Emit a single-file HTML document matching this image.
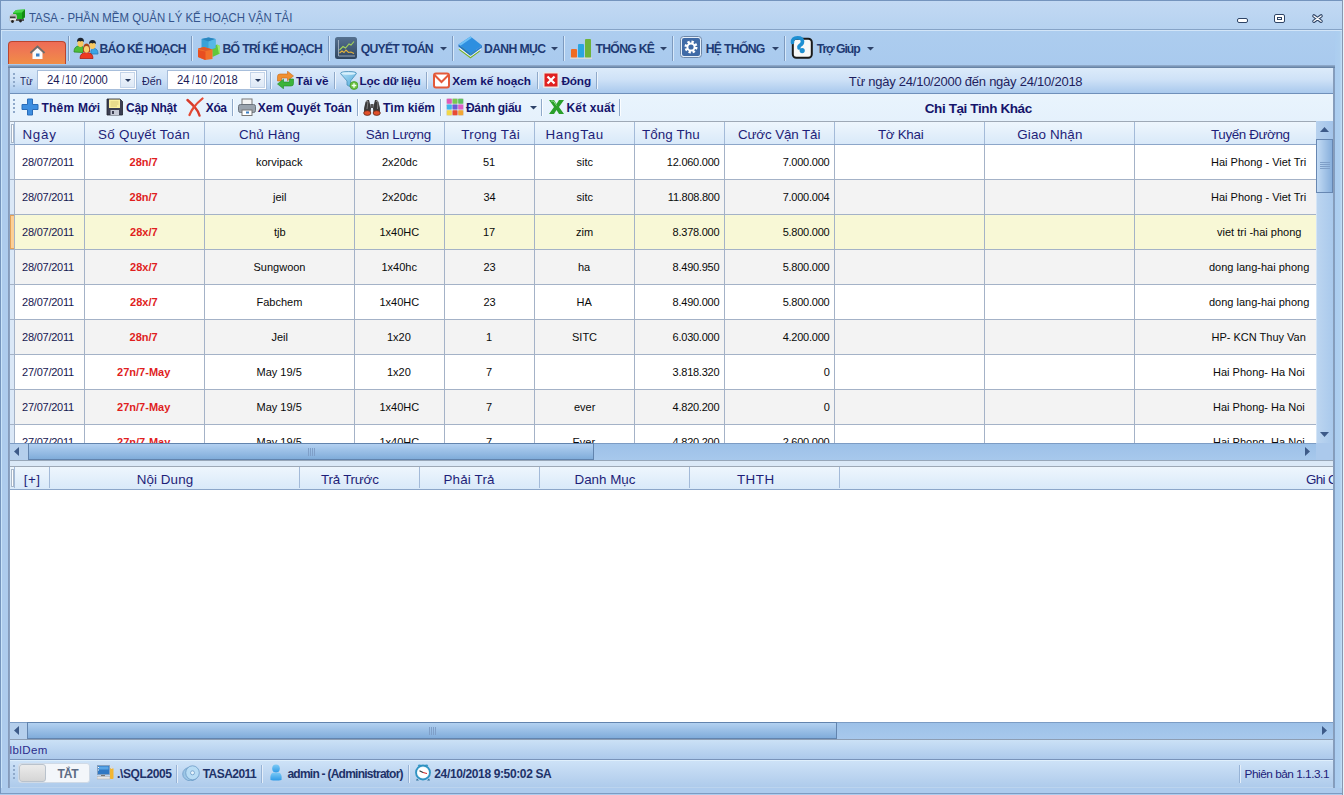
<!DOCTYPE html><html><head><meta charset="utf-8"><style>
*{margin:0;padding:0;box-sizing:border-box}
html,body{width:1344px;height:795px;overflow:hidden;background:#b9d4ef;font-family:"Liberation Sans",sans-serif}
div,span,svg{position:absolute}
.t{white-space:nowrap;line-height:1}
</style></head><body>
<div style="left:0px;top:0px;width:1344px;height:795px;background:#adcbed"></div>
<div style="left:0px;top:0px;width:1343px;height:794px;border:1px solid #7494bd;border-right-color:#7d9cc2;border-bottom-color:#7d9cc2"></div>
<div style="left:1px;top:1px;width:1342px;height:28px;background:linear-gradient(#c2d9f3,#b6d2f0)"></div>
<div style="left:1px;top:29px;width:1342px;height:1px;background:#86a3c6"></div>
<div style="left:1px;top:30px;width:1342px;height:1px;background:#d2e5f8"></div>
<span class="t" style="left:29.40px;top:12px;font-size:12.8px;color:#34548c;transform:scaleX(0.8919);transform-origin:0 0;">TASA - PHẦN MỀM QUẢN LÝ KẾ HOẠCH VẬN TẢI</span>
<svg style="left:9px;top:9px" width="17" height="14" viewBox="0 0 17 14"><path d="M4 4 L7 1 L16 0.5 L16 8 L13 11 L5 11 Z" fill="#1fb51f"/><path d="M4 4 L7 1 L16 0.5 L13 3.5 Z" fill="#4cd64c"/><path d="M13 3.5 L16 0.5 V8 L13 11 Z" fill="#138a13"/><path d="M0.5 7 L3 5 L7 5 L8 7 V12 L1 12.5 L0.5 11 Z" fill="#b8b8b8"/><path d="M1 7.5 H6.5 V9 H1 Z" fill="#3a3a3a"/><rect x="1" y="10" width="6" height="1.2" fill="#eee"/><rect x="7" y="10" width="8" height="2" fill="#555"/><circle cx="3.5" cy="12.5" r="1.4" fill="#222"/><circle cx="11.5" cy="12" r="1.4" fill="#222"/></svg>
<div style="left:1237px;top:18px;width:11px;height:5px;border:1.5px solid #2e4466;border-radius:2px;background:#fff"></div>
<div style="left:1274px;top:14px;width:11px;height:9px;border:1.5px solid #2e4466;border-radius:2px;background:#fff"></div>
<div style="left:1277px;top:17px;width:5px;height:3px;border:1.2px solid #2e4466;background:#fff"></div>
<svg style="left:1311px;top:13px" width="13" height="11" viewBox="0 0 13 11"><path d="M2.9 2.9 L10.1 8.3 M10.1 2.9 L2.9 8.3" stroke="#2e4466" stroke-width="3.4" stroke-linecap="round"/><path d="M2.9 2.9 L10.1 8.3 M10.1 2.9 L2.9 8.3" stroke="#fff" stroke-width="1.3" stroke-linecap="round"/></svg>
<div style="left:1px;top:31px;width:1342px;height:34px;background:linear-gradient(#adcdef,#a9caee)"></div>
<div style="left:8px;top:41px;width:58px;height:23px;background:linear-gradient(#ee6c56,#ef7a52 45%,#f18e46);border:1px solid #b9452f;border-bottom:none;border-radius:4px 4px 0 0"></div>
<svg style="left:29px;top:45px" width="17" height="15" viewBox="0 0 17 15"><path d="M1.5 8 L8.5 1.5 L15.5 8" fill="none" stroke="#6d6d6d" stroke-width="2"/><path d="M3.5 7.5 L8.5 3 L13.5 7.5 V14 H3.5 Z" fill="#fafafa"/><rect x="7" y="8.5" width="3.5" height="3" fill="#3b7fc4"/></svg>
<div style="left:68px;top:36px;width:1px;height:25px;background:#7d9abf"></div>
<div style="left:69px;top:36px;width:1px;height:25px;background:#d6e8fa"></div>
<div style="left:191px;top:36px;width:1px;height:25px;background:#7d9abf"></div>
<div style="left:192px;top:36px;width:1px;height:25px;background:#d6e8fa"></div>
<div style="left:328px;top:36px;width:1px;height:25px;background:#7d9abf"></div>
<div style="left:329px;top:36px;width:1px;height:25px;background:#d6e8fa"></div>
<div style="left:452px;top:36px;width:1px;height:25px;background:#7d9abf"></div>
<div style="left:453px;top:36px;width:1px;height:25px;background:#d6e8fa"></div>
<div style="left:563px;top:36px;width:1px;height:25px;background:#7d9abf"></div>
<div style="left:564px;top:36px;width:1px;height:25px;background:#d6e8fa"></div>
<div style="left:672px;top:36px;width:1px;height:25px;background:#7d9abf"></div>
<div style="left:673px;top:36px;width:1px;height:25px;background:#d6e8fa"></div>
<div style="left:784px;top:36px;width:1px;height:25px;background:#7d9abf"></div>
<div style="left:785px;top:36px;width:1px;height:25px;background:#d6e8fa"></div>
<span class="t" style="left:99.60px;top:43px;font-size:12.2px;color:#1e3a74;font-weight:bold;letter-spacing:-0.782px;">BÁO KẾ HOẠCH</span>
<span class="t" style="left:222.50px;top:43px;font-size:12.2px;color:#1e3a74;font-weight:bold;letter-spacing:-0.679px;">BỐ TRÍ KẾ HOẠCH</span>
<span class="t" style="left:360.80px;top:43px;font-size:12.2px;color:#1e3a74;font-weight:bold;letter-spacing:-0.756px;">QUYẾT TOÁN</span>
<span class="t" style="left:484.00px;top:43px;font-size:12.2px;color:#1e3a74;font-weight:bold;letter-spacing:-0.629px;">DANH MỤC</span>
<span class="t" style="left:595.50px;top:43px;font-size:12.2px;color:#1e3a74;font-weight:bold;letter-spacing:-0.700px;">THỐNG KÊ</span>
<span class="t" style="left:705.70px;top:43px;font-size:12.2px;color:#1e3a74;font-weight:bold;letter-spacing:-0.671px;">HỆ THỐNG</span>
<span class="t" style="left:816.70px;top:43px;font-size:12.2px;color:#1e3a74;font-weight:bold;letter-spacing:-1.043px;">Trợ Giúp</span>
<svg style="left:440px;top:47px" width="7" height="4" viewBox="0 0 7 4"><path d="M0 0 H7 L3.5 3.5 Z" fill="#2d4269"/></svg>
<svg style="left:551px;top:47px" width="7" height="4" viewBox="0 0 7 4"><path d="M0 0 H7 L3.5 3.5 Z" fill="#2d4269"/></svg>
<svg style="left:660px;top:47px" width="7" height="4" viewBox="0 0 7 4"><path d="M0 0 H7 L3.5 3.5 Z" fill="#2d4269"/></svg>
<svg style="left:772px;top:47px" width="7" height="4" viewBox="0 0 7 4"><path d="M0 0 H7 L3.5 3.5 Z" fill="#2d4269"/></svg>
<svg style="left:867px;top:47px" width="7" height="4" viewBox="0 0 7 4"><path d="M0 0 H7 L3.5 3.5 Z" fill="#2d4269"/></svg>
<svg style="left:70px;top:34px" width="32" height="28" viewBox="0 0 32 28"><path d="M4 18 Q4 12.5 8.5 12 H12 Q14 13 13 18.5 Z" fill="#4cbf3a" stroke="#2f8a25" stroke-width="0.8"/><ellipse cx="10.5" cy="9.3" rx="3" ry="3.6" fill="#f8c860"/><path d="M7 8 Q7 3.8 10.5 3.8 Q14 3.8 14 8 Q12 6.5 10.5 7.5 Q9 6.5 7 8 Z" fill="#1c2430"/><path d="M21 20 Q20 14.5 24 14.5 Q28 14.5 28 20 Z" fill="#3aa6e6" stroke="#2a78b8" stroke-width="0.8"/><ellipse cx="22.5" cy="11.3" rx="3" ry="3.6" fill="#f8c860"/><path d="M19 10 Q19 6 22.5 6 Q26 6 26 10 Q24 8.5 22.5 9.5 Q21 8.5 19 10 Z" fill="#1c2430"/><path d="M13 18 Q12.5 9.5 16.5 9.5 Q20.5 9.5 20 18 Z" fill="#a8461a"/><path d="M10 24.5 Q10 18.5 16.5 18.5 Q23 18.5 23 24.5 Z" fill="#ee3a22" stroke="#b02010" stroke-width="0.8"/><ellipse cx="16.5" cy="15.3" rx="2.6" ry="3.4" fill="#fbd070"/></svg>
<svg style="left:195px;top:34px" width="32" height="28" viewBox="0 0 32 28"><path d="M17 13 L22 10.5 L25 12 L25 19.5 L17.5 23 Z" fill="#62c83a"/><path d="M22 10.5 L25 12 L25 19.5 L24 20 L22.5 12.5 Z" fill="#9de870"/><path d="M6.5 5 L13.5 3.5 L20.5 5 V14 L13.5 16 L6.5 14 Z" fill="#3aa2d8"/><path d="M6.5 5 L13.5 3.5 L20.5 5 L13.5 7.5 Z" fill="#2a86bf"/><path d="M13.5 7.5 L20.5 5 V14 L13.5 16 Z" fill="#56b8e6"/><path d="M3 14.5 L9 13 L17.5 15.5 V25 L10 26 L3 23 Z" fill="#f2702a"/><path d="M3 14.5 L9 13 L17.5 15.5 L10.5 17 Z" fill="#e0582a"/><path d="M3 16 L10.5 17.5 V26 L3 23 Z" fill="#e84e20"/></svg>
<svg style="left:335px;top:37px" width="23" height="22" viewBox="0 0 23 22"><defs><linearGradient id="gch" x1="0" y1="0" x2="0" y2="1"><stop offset="0" stop-color="#56718f"/><stop offset="1" stop-color="#2f4661"/></linearGradient></defs><rect x="0" y="0" width="22" height="22" rx="2.5" fill="url(#gch)"/><path d="M3.5 3 V19 H20" stroke="#aebccc" stroke-width="0.8" fill="none"/><path d="M4.5 13 L8 9.5 L10.5 11 L14 7 L16 8 L19 4.5" stroke="#a4d45a" stroke-width="1.1" fill="none"/><path d="M4.5 16 L7 14 L9 15.5 L11 13 L13.5 15.5 L16 15 L19 16.5" stroke="#e7b43a" stroke-width="1.1" fill="none"/></svg>
<svg style="left:458px;top:36px" width="25" height="23" viewBox="0 0 25 23"><path d="M0.5 13.5 L9 8 L21 16 L12.5 22.5 Z" fill="#8cc43a"/><path d="M2 12.5 L12.5 20.5 L21.5 14 L22.5 15 L12.5 22 L1.5 14 Z" fill="#6ea82a"/><path d="M1.5 11 L12.5 19 L23 11.5 L23 13.5 L12.5 21 L1.5 13 Z" fill="#f2f6f8"/><path d="M0.5 8.5 L12.5 0.5 L24 9.5 L12.5 18 Z" fill="#2e8fe0"/><path d="M0.5 8.5 L12.5 0.5 L14 1.7 L2.5 9.8 Z" fill="#6ec0f6"/><path d="M0.5 8.5 L12.5 18 L12.5 20 L0.5 10.5 Z" fill="#1f6fc0"/><path d="M12.5 18 L24 9.5 L24 11.5 L12.5 20 Z" fill="#2a7ed0"/></svg>
<svg style="left:570px;top:38px" width="22" height="21" viewBox="0 0 22 21"><rect x="1" y="11" width="6" height="9" rx="1" fill="#f06c22"/><rect x="8" y="6" width="6" height="14" rx="1" fill="#2aa6df"/><rect x="15" y="1" width="6" height="19" rx="1" fill="#6eb33a"/><rect x="0" y="19.5" width="22" height="1.5" fill="#d9d9d9"/></svg>
<svg style="left:680px;top:36px" width="22" height="22" viewBox="0 0 22 22"><rect x="0.5" y="0.5" width="21" height="21" rx="3" fill="#e5eef8" stroke="#6d87a8"/><rect x="2" y="2" width="18" height="18" rx="2" fill="#3f6aa6"/><circle cx="11" cy="11" r="5" fill="none" stroke="#fff" stroke-width="3" stroke-dasharray="2.2 1.7"/><circle cx="11" cy="11" r="3.6" fill="none" stroke="#fff" stroke-width="2"/></svg>
<svg style="left:790px;top:36px" width="24" height="24" viewBox="0 0 24 24"><rect x="2.8" y="2.8" width="19" height="19" rx="3.5" fill="#f8f8f8" stroke="#1a1a1a" stroke-width="2"/><path d="M2.5 6.5 Q2 1.8 7.5 1.8 Q12.5 1.8 12.5 5.5 Q12.5 8 9.8 9.5 Q8.5 10.5 9 12" stroke="#1e8fd2" stroke-width="3.6" fill="none" stroke-linecap="round"/><circle cx="12.2" cy="14.6" r="2.6" fill="#1e8fd2"/></svg>
<div style="left:8px;top:66px;width:1327px;height:722px;background:#bcd4ee"></div>
<div style="left:8px;top:65px;width:1327px;height:3px;background:linear-gradient(#95b0d0,#5f7b9d)"></div>
<div style="left:8px;top:68px;width:2px;height:720px;background:linear-gradient(90deg,#8397b6,#8da6c8)"></div>
<div style="left:1px;top:31px;width:1px;height:757px;background:#c9e3f9"></div>
<div style="left:10px;top:68px;width:1324px;height:26px;background:linear-gradient(#dcebfa,#cfe2f7 45%,#a9c9ed);border-bottom:1px solid #6f90ba;border-right:1px solid #8fabd0"></div>
<div style="left:10px;top:94px;width:1324px;height:27px;background:linear-gradient(#e9f4fd,#e5f1fc)"></div>
<div style="left:13px;top:73px;width:2px;height:2px;background:#8fa9ca"></div>
<div style="left:13px;top:77px;width:2px;height:2px;background:#8fa9ca"></div>
<div style="left:13px;top:81px;width:2px;height:2px;background:#8fa9ca"></div>
<div style="left:13px;top:85px;width:2px;height:2px;background:#8fa9ca"></div>
<div style="left:13px;top:99px;width:2px;height:2px;background:#8fa9ca"></div>
<div style="left:13px;top:103px;width:2px;height:2px;background:#8fa9ca"></div>
<div style="left:13px;top:107px;width:2px;height:2px;background:#8fa9ca"></div>
<div style="left:13px;top:111px;width:2px;height:2px;background:#8fa9ca"></div>
<span class="t" style="left:20.40px;top:76px;font-size:11.5px;color:#1e1e5e;transform:scaleX(0.8643);transform-origin:0 0;">Từ</span>
<span class="t" style="left:141.50px;top:76px;font-size:11.5px;color:#1e1e5e;transform:scaleX(0.9286);transform-origin:0 0;">Đến</span>
<div style="left:37px;top:70px;width:100px;height:20px;background:#fff;border:1px solid #a7bedb"></div>
<span class="t" style="left:47.10px;top:74px;font-size:12.6px;color:#1c1c58;transform:scaleX(0.9000);transform-origin:0 0;">24</span>
<span class="t" style="left:62.00px;top:74px;font-size:12.6px;color:#1c1c58;transform:scaleX(0.6250);transform-origin:0 0;">/</span>
<span class="t" style="left:65.43px;top:74px;font-size:12.6px;color:#1c1c58;transform:scaleX(0.8692);transform-origin:0 0;">10</span>
<span class="t" style="left:79.90px;top:74px;font-size:12.6px;color:#1c1c58;transform:scaleX(0.6250);transform-origin:0 0;">/</span>
<span class="t" style="left:83.11px;top:74px;font-size:12.6px;color:#1c1c58;transform:scaleX(0.8852);transform-origin:0 0;">2000</span>
<div style="left:120px;top:72px;width:15px;height:16px;background:linear-gradient(#f2f6fc,#dde8f5);border:1px solid #c3d4e9"></div>
<svg style="left:125px;top:79px" width="6" height="3" viewBox="0 0 6 3"><path d="M0 0 H6 L3 3 Z" fill="#27395c"/></svg>
<div style="left:167px;top:70px;width:100px;height:20px;background:#fff;border:1px solid #a7bedb"></div>
<span class="t" style="left:177.10px;top:74px;font-size:12.6px;color:#1c1c58;transform:scaleX(0.9000);transform-origin:0 0;">24</span>
<span class="t" style="left:192.00px;top:74px;font-size:12.6px;color:#1c1c58;transform:scaleX(0.6250);transform-origin:0 0;">/</span>
<span class="t" style="left:195.43px;top:74px;font-size:12.6px;color:#1c1c58;transform:scaleX(0.8692);transform-origin:0 0;">10</span>
<span class="t" style="left:209.90px;top:74px;font-size:12.6px;color:#1c1c58;transform:scaleX(0.6250);transform-origin:0 0;">/</span>
<span class="t" style="left:213.11px;top:74px;font-size:12.6px;color:#1c1c58;transform:scaleX(0.8852);transform-origin:0 0;">2018</span>
<div style="left:250px;top:72px;width:15px;height:16px;background:linear-gradient(#f2f6fc,#dde8f5);border:1px solid #c3d4e9"></div>
<svg style="left:255px;top:79px" width="6" height="3" viewBox="0 0 6 3"><path d="M0 0 H6 L3 3 Z" fill="#27395c"/></svg>
<div style="left:270px;top:72px;width:1px;height:17px;background:#8fa9c9"></div>
<div style="left:271px;top:72px;width:1px;height:17px;background:#eef5fd"></div>
<div style="left:334px;top:72px;width:1px;height:17px;background:#8fa9c9"></div>
<div style="left:335px;top:72px;width:1px;height:17px;background:#eef5fd"></div>
<div style="left:426px;top:72px;width:1px;height:17px;background:#8fa9c9"></div>
<div style="left:427px;top:72px;width:1px;height:17px;background:#eef5fd"></div>
<div style="left:537px;top:72px;width:1px;height:17px;background:#8fa9c9"></div>
<div style="left:538px;top:72px;width:1px;height:17px;background:#eef5fd"></div>
<div style="left:596px;top:72px;width:1px;height:17px;background:#8fa9c9"></div>
<div style="left:597px;top:72px;width:1px;height:17px;background:#eef5fd"></div>
<span class="t" style="left:296.00px;top:76px;font-size:11.8px;color:#15156b;font-weight:bold;letter-spacing:-0.200px;">Tải về</span>
<span class="t" style="left:359.50px;top:76px;font-size:11.8px;color:#15156b;font-weight:bold;letter-spacing:-0.250px;">Lọc dữ liệu</span>
<span class="t" style="left:452.30px;top:76px;font-size:11.8px;color:#15156b;font-weight:bold;letter-spacing:-0.064px;">Xem kế hoạch</span>
<span class="t" style="left:561.40px;top:76px;font-size:11.8px;color:#15156b;font-weight:bold;letter-spacing:-0.133px;">Đóng</span>
<span class="t" style="left:848.70px;top:75px;font-size:13px;color:#1e1e5e;letter-spacing:-0.243px;">Từ ngày 24/10/2000 đến ngày 24/10/2018</span>
<svg style="left:277px;top:71px" width="17" height="18" viewBox="0 0 17 18"><path d="M0.5 10 V5.5 Q0.5 3 3 3 H10.5 V0.2 L16.5 5 L10.5 9.8 V7 H4.5 V10 Z" fill="#f09030" stroke="#c86a18" stroke-width="0.6"/><path d="M16.5 8 V12.5 Q16.5 15 14 15 H6.5 V17.8 L0.5 13 L6.5 8.2 V11 H12.5 V8 Z" fill="#3cb43a" stroke="#1e8a22" stroke-width="0.6"/></svg>
<svg style="left:340px;top:71px" width="18" height="19" viewBox="0 0 18 19"><defs><linearGradient id="gfu" x1="0" y1="0" x2="1" y2="1"><stop offset="0" stop-color="#b8e2f8"/><stop offset="1" stop-color="#4aa6d8"/></linearGradient></defs><path d="M0.5 2.5 Q0.5 0.5 8.5 0.5 Q16.5 0.5 16.5 2.5 L10.5 10 V16 L7 14 V10 Z" fill="url(#gfu)" stroke="#4a8fb8" stroke-width="0.8"/><ellipse cx="8.5" cy="2.5" rx="7" ry="1.3" fill="#d8f0fc"/><circle cx="14" cy="14.5" r="4" fill="#6cc040" stroke="#3e9a28" stroke-width="0.7"/><path d="M14 12.2 V16.8 M11.7 14.5 H16.3" stroke="#f0fff0" stroke-width="1.4"/></svg>
<svg style="left:433px;top:71px" width="17" height="18" viewBox="0 0 17 18"><rect x="1" y="2.5" width="15" height="14" rx="2" fill="#fff" stroke="#e45a3a" stroke-width="2"/><path d="M1.5 4 L8.5 11 L15.5 4" stroke="#e45a3a" stroke-width="2" fill="none"/></svg>
<svg style="left:543px;top:72px" width="16" height="16" viewBox="0 0 16 16"><rect x="0" y="0" width="16" height="16" rx="1" fill="#e8e8e8"/><rect x="1.5" y="1.5" width="13" height="13" fill="#e02020"/><path d="M4.5 4.5 L11.5 11.5 M11.5 4.5 L4.5 11.5" stroke="#fff" stroke-width="2.2"/></svg>
<div style="left:232px;top:99px;width:1px;height:17px;background:#8fa9c9"></div>
<div style="left:233px;top:99px;width:1px;height:17px;background:#fbfdff"></div>
<div style="left:357px;top:99px;width:1px;height:17px;background:#8fa9c9"></div>
<div style="left:358px;top:99px;width:1px;height:17px;background:#fbfdff"></div>
<div style="left:440px;top:99px;width:1px;height:17px;background:#8fa9c9"></div>
<div style="left:441px;top:99px;width:1px;height:17px;background:#fbfdff"></div>
<div style="left:541px;top:99px;width:1px;height:17px;background:#8fa9c9"></div>
<div style="left:542px;top:99px;width:1px;height:17px;background:#fbfdff"></div>
<div style="left:619px;top:99px;width:1px;height:17px;background:#8fa9c9"></div>
<div style="left:620px;top:99px;width:1px;height:17px;background:#fbfdff"></div>
<span class="t" style="left:41.50px;top:102px;font-size:12px;color:#15156b;font-weight:bold;letter-spacing:0.214px;">Thêm Mới</span>
<span class="t" style="left:126.00px;top:102px;font-size:12px;color:#15156b;font-weight:bold;letter-spacing:-0.243px;">Cập Nhật</span>
<span class="t" style="left:205.80px;top:102px;font-size:12px;color:#15156b;font-weight:bold;letter-spacing:-0.400px;">Xóa</span>
<span class="t" style="left:257.70px;top:102px;font-size:12px;color:#15156b;font-weight:bold;letter-spacing:0.023px;">Xem Quyết Toán</span>
<span class="t" style="left:383.00px;top:102px;font-size:12px;color:#15156b;font-weight:bold;letter-spacing:0.000px;">Tìm kiếm</span>
<span class="t" style="left:466.00px;top:102px;font-size:12px;color:#15156b;font-weight:bold;letter-spacing:-0.300px;">Đánh giấu</span>
<span class="t" style="left:566.60px;top:102px;font-size:12px;color:#15156b;font-weight:bold;letter-spacing:0.114px;">Kết xuất</span>
<span class="t" style="left:924.70px;top:102px;font-size:13.5px;color:#15156b;font-weight:bold;letter-spacing:-0.388px;">Chi Tại Tinh Khác</span>
<svg style="left:530px;top:106px" width="7" height="4" viewBox="0 0 7 4"><path d="M0 0 H7 L3.5 3.5 Z" fill="#2d4269"/></svg>
<svg style="left:21px;top:98px" width="18" height="18" viewBox="0 0 18 18"><path d="M6.5 1 H11.5 V6.5 H17 V11.5 H11.5 V17 H6.5 V11.5 H1 V6.5 H6.5 Z" fill="#3d8ee0" stroke="#2a6cb8" stroke-width="1"/></svg>
<svg style="left:106px;top:98px" width="17" height="18" viewBox="0 0 17 18"><path d="M1 1 H14 L16.5 3.5 V17 H1 Z" fill="#3c3f52" stroke="#22242e" stroke-width="0.8"/><rect x="3" y="1.5" width="11" height="8.5" fill="#fbf0a0"/><path d="M4.5 4 H12.5 M4.5 6 H12.5 M4.5 8 H11" stroke="#c8b868" stroke-width="0.7"/><rect x="4.5" y="12" width="8.5" height="5" fill="#c5cad6"/><rect x="6" y="13" width="2" height="3" fill="#3c3f52"/></svg>
<svg style="left:186px;top:97px" width="18" height="20" viewBox="0 0 18 20"><path d="M1.5 3 Q6 7 9 10.5 Q12.5 14.5 13.5 18.5" stroke="#d83a2a" stroke-width="2.4" fill="none" stroke-linecap="round"/><path d="M16.5 1.5 Q11 6 8 10 Q5 14 3.5 18" stroke="#e44a34" stroke-width="2.2" fill="none" stroke-linecap="round"/></svg>
<svg style="left:238px;top:98px" width="18" height="18" viewBox="0 0 18 18"><rect x="4" y="1" width="10" height="6" fill="#f4f4f4" stroke="#777"/><rect x="0.5" y="6.5" width="17" height="8" rx="2" fill="#9aa3ad" stroke="#6b737c"/><rect x="4" y="12" width="10" height="5.5" fill="#fff" stroke="#777"/><rect x="8" y="13.5" width="3" height="2" fill="#3b7fc4"/></svg>
<svg style="left:363px;top:99px" width="18" height="17" viewBox="0 0 18 17"><path d="M2.5 3 Q3.5 0.5 6 1 L8 9 L7.5 14.5 H1 Q0.5 9 2.5 3 Z" fill="#3a3a3a"/><path d="M15.5 3 Q14.5 0.5 12 1 L10 9 L10.5 14.5 H17 Q17.5 9 15.5 3 Z" fill="#3a3a3a"/><path d="M3 3 Q4 2 5 2.5 L4 10" stroke="#8a8a8a" stroke-width="0.9" fill="none"/><path d="M13 2.5 Q14 2 15 3 L14.5 10" stroke="#8a8a8a" stroke-width="0.9" fill="none"/><rect x="7.5" y="5" width="3" height="4" fill="#555"/><ellipse cx="4.3" cy="14" rx="3.6" ry="2.4" fill="#e2502a" stroke="#5a2a1a" stroke-width="0.8"/><ellipse cx="13.7" cy="14" rx="3.6" ry="2.4" fill="#e2502a" stroke="#5a2a1a" stroke-width="0.8"/></svg>
<svg style="left:446px;top:98px" width="18" height="18" viewBox="0 0 18 18"><rect x="0" y="0" width="18" height="18" rx="1.5" fill="#d8dde4"/><rect x="0.8" y="0.8" width="5" height="5" rx="0.8" fill="#e05ab8"/><rect x="6.5" y="0.8" width="5" height="5" rx="0.8" fill="#78c850"/><rect x="12.2" y="0.8" width="5" height="5" rx="0.8" fill="#5ec060"/><rect x="0.8" y="6.5" width="5" height="5" rx="0.8" fill="#3cb4ec"/><rect x="6.5" y="6.5" width="5" height="5" rx="0.8" fill="#6a5ad8"/><rect x="12.2" y="6.5" width="5" height="5" rx="0.8" fill="#e060c8"/><rect x="0.8" y="12.2" width="5" height="5" rx="0.8" fill="#f2d848"/><rect x="6.5" y="12.2" width="5" height="5" rx="0.8" fill="#e84a34"/><rect x="12.2" y="12.2" width="5" height="5" rx="0.8" fill="#f2a634"/></svg>
<svg style="left:548px;top:99px" width="17" height="16" viewBox="0 0 17 16"><path d="M1 1 H6 L8.5 5 L11 1 H16 L11 8 L16 15 H11 L8.5 11 L6 15 H1 L6 8 Z" fill="#2aa02a"/><path d="M3 2 H5.5 L8.5 6.5" stroke="#8fe08f" stroke-width="1" fill="none"/></svg>
<div style="left:10px;top:121px;width:1323px;height:339px;background:#fff"></div>
<div style="left:10px;top:121px;width:1306px;height:24px;background:linear-gradient(#eef6fd,#d9e9f9);border-top:1px solid #9ea9b6;border-bottom:1px solid #8ca6c9"></div>
<div style="left:84px;top:122px;width:1px;height:22px;background:#a3bad8"></div>
<div style="left:204px;top:122px;width:1px;height:22px;background:#a3bad8"></div>
<div style="left:354px;top:122px;width:1px;height:22px;background:#a3bad8"></div>
<div style="left:444px;top:122px;width:1px;height:22px;background:#a3bad8"></div>
<div style="left:534px;top:122px;width:1px;height:22px;background:#a3bad8"></div>
<div style="left:634px;top:122px;width:1px;height:22px;background:#a3bad8"></div>
<div style="left:724px;top:122px;width:1px;height:22px;background:#a3bad8"></div>
<div style="left:834px;top:122px;width:1px;height:22px;background:#a3bad8"></div>
<div style="left:984px;top:122px;width:1px;height:22px;background:#a3bad8"></div>
<div style="left:1134px;top:122px;width:1px;height:22px;background:#a3bad8"></div>
<div style="left:14px;top:122px;width:1px;height:22px;background:#a3bad8"></div>
<div style="left:11px;top:124px;width:3px;height:19px;background:#ffffff;border:1px solid #a9b7c8"></div>
<span class="t" style="left:22.40px;top:128px;font-size:13.4px;color:#1e1e78;letter-spacing:0.800px;">Ngày</span>
<span class="t" style="left:98.00px;top:128px;font-size:13.4px;color:#1e1e78;letter-spacing:0.283px;">Số Quyết Toán</span>
<span class="t" style="left:239.00px;top:128px;font-size:13.4px;color:#1e1e78;letter-spacing:0.100px;">Chủ Hàng</span>
<span class="t" style="left:365.80px;top:128px;font-size:13.4px;color:#1e1e78;letter-spacing:-0.275px;">Sản Lượng</span>
<span class="t" style="left:461.30px;top:128px;font-size:13.4px;color:#1e1e78;letter-spacing:0.238px;">Trọng Tải</span>
<span class="t" style="left:545.40px;top:128px;font-size:13.4px;color:#1e1e78;letter-spacing:0.717px;">HangTau</span>
<span class="t" style="left:642.00px;top:128px;font-size:13.4px;color:#1e1e78;letter-spacing:0.086px;">Tổng Thu</span>
<span class="t" style="left:737.90px;top:128px;font-size:13.4px;color:#1e1e78;letter-spacing:-0.109px;">Cước Vận Tải</span>
<span class="t" style="left:877.90px;top:128px;font-size:13.4px;color:#1e1e78;letter-spacing:-0.283px;">Tờ Khai</span>
<span class="t" style="left:1017.20px;top:128px;font-size:13.4px;color:#1e1e78;letter-spacing:0.150px;">Giao Nhận</span>
<span class="t" style="left:1211.00px;top:128px;font-size:13.4px;color:#1e1e78;letter-spacing:-0.370px;">Tuyến Đường</span>
<div style="left:10px;top:145px;width:1306px;height:298px;overflow:hidden">
<div style="left:5px;top:0px;width:1301px;height:34px;background:#ffffff"></div>
<div style="left:0px;top:0px;width:4px;height:34px;background:#dbe8f7"></div>
<div style="left:0px;top:34px;width:1306px;height:1px;background:#a4b2c7"></div>
<div style="left:5px;top:35px;width:1301px;height:34px;background:#f3f3f3"></div>
<div style="left:0px;top:35px;width:4px;height:34px;background:#dbe8f7"></div>
<div style="left:0px;top:69px;width:1306px;height:1px;background:#a4b2c7"></div>
<div style="left:5px;top:70px;width:1301px;height:34px;background:#f8f8d6"></div>
<div style="left:0px;top:70px;width:4px;height:34px;background:#dbe8f7"></div>
<div style="left:0px;top:70px;width:5px;height:34px;background:#fccf96;border:1px solid #e3a25a"></div>
<div style="left:0px;top:104px;width:1306px;height:1px;background:#a4b2c7"></div>
<div style="left:5px;top:105px;width:1301px;height:34px;background:#f3f3f3"></div>
<div style="left:0px;top:105px;width:4px;height:34px;background:#dbe8f7"></div>
<div style="left:0px;top:139px;width:1306px;height:1px;background:#a4b2c7"></div>
<div style="left:5px;top:140px;width:1301px;height:34px;background:#ffffff"></div>
<div style="left:0px;top:140px;width:4px;height:34px;background:#dbe8f7"></div>
<div style="left:0px;top:174px;width:1306px;height:1px;background:#a4b2c7"></div>
<div style="left:5px;top:175px;width:1301px;height:34px;background:#f3f3f3"></div>
<div style="left:0px;top:175px;width:4px;height:34px;background:#dbe8f7"></div>
<div style="left:0px;top:209px;width:1306px;height:1px;background:#a4b2c7"></div>
<div style="left:5px;top:210px;width:1301px;height:34px;background:#ffffff"></div>
<div style="left:0px;top:210px;width:4px;height:34px;background:#dbe8f7"></div>
<div style="left:0px;top:244px;width:1306px;height:1px;background:#a4b2c7"></div>
<div style="left:5px;top:245px;width:1301px;height:34px;background:#f3f3f3"></div>
<div style="left:0px;top:245px;width:4px;height:34px;background:#dbe8f7"></div>
<div style="left:0px;top:279px;width:1306px;height:1px;background:#a4b2c7"></div>
<div style="left:5px;top:280px;width:1301px;height:34px;background:#ffffff"></div>
<div style="left:0px;top:280px;width:4px;height:34px;background:#dbe8f7"></div>
<div style="left:0px;top:314px;width:1306px;height:1px;background:#a4b2c7"></div>
</div>
<div style="left:14px;top:145px;width:1px;height:298px;background:#a4b2c7"></div>
<div style="left:84px;top:145px;width:1px;height:298px;background:#a4b2c7"></div>
<div style="left:204px;top:145px;width:1px;height:298px;background:#a4b2c7"></div>
<div style="left:354px;top:145px;width:1px;height:298px;background:#a4b2c7"></div>
<div style="left:444px;top:145px;width:1px;height:298px;background:#a4b2c7"></div>
<div style="left:534px;top:145px;width:1px;height:298px;background:#a4b2c7"></div>
<div style="left:634px;top:145px;width:1px;height:298px;background:#a4b2c7"></div>
<div style="left:724px;top:145px;width:1px;height:298px;background:#a4b2c7"></div>
<div style="left:834px;top:145px;width:1px;height:298px;background:#a4b2c7"></div>
<div style="left:984px;top:145px;width:1px;height:298px;background:#a4b2c7"></div>
<div style="left:1134px;top:145px;width:1px;height:298px;background:#a4b2c7"></div>
<span class="t" style="left:22.10px;top:157px;font-size:11px;color:#161650;letter-spacing:-0.244px;">28/07/2011</span>
<span class="t" style="left:129.60px;top:157px;font-size:11px;color:#e01e1e;font-weight:bold;letter-spacing:0.000px;">28n/7</span>
<span class="t" style="left:256.00px;top:157px;font-size:11px;color:#0a0a0a;letter-spacing:0.000px;">korvipack</span>
<span class="t" style="left:382.00px;top:157px;font-size:11px;color:#0a0a0a;letter-spacing:0.000px;">2x20dc</span>
<span class="t" style="left:483.00px;top:157px;font-size:11px;color:#0a0a0a;letter-spacing:0.000px;">51</span>
<span class="t" style="left:576.50px;top:157px;font-size:11px;color:#0a0a0a;letter-spacing:0.000px;">sitc</span>
<span class="t" style="left:666.85px;top:157px;font-size:11px;color:#0a0a0a;letter-spacing:-0.250px;">12.060.000</span>
<span class="t" style="left:782.70px;top:157px;font-size:11px;color:#0a0a0a;letter-spacing:-0.250px;">7.000.000</span>
<span class="t" style="left:1211.00px;top:157px;font-size:11px;color:#0a0a0a;letter-spacing:0.000px;">Hai Phong - Viet Tri</span>
<span class="t" style="left:22.10px;top:192px;font-size:11px;color:#161650;letter-spacing:-0.244px;">28/07/2011</span>
<span class="t" style="left:129.60px;top:192px;font-size:11px;color:#e01e1e;font-weight:bold;letter-spacing:0.000px;">28n/7</span>
<span class="t" style="left:273.00px;top:192px;font-size:11px;color:#0a0a0a;letter-spacing:0.000px;">jeil</span>
<span class="t" style="left:382.00px;top:192px;font-size:11px;color:#0a0a0a;letter-spacing:0.000px;">2x20dc</span>
<span class="t" style="left:483.50px;top:192px;font-size:11px;color:#0a0a0a;letter-spacing:0.000px;">34</span>
<span class="t" style="left:576.50px;top:192px;font-size:11px;color:#0a0a0a;letter-spacing:0.000px;">sitc</span>
<span class="t" style="left:667.85px;top:192px;font-size:11px;color:#0a0a0a;letter-spacing:-0.250px;">11.808.800</span>
<span class="t" style="left:782.70px;top:192px;font-size:11px;color:#0a0a0a;letter-spacing:-0.250px;">7.000.004</span>
<span class="t" style="left:1211.00px;top:192px;font-size:11px;color:#0a0a0a;letter-spacing:0.000px;">Hai Phong - Viet Tri</span>
<span class="t" style="left:22.10px;top:227px;font-size:11px;color:#161650;letter-spacing:-0.244px;">28/07/2011</span>
<span class="t" style="left:130.10px;top:227px;font-size:11px;color:#e01e1e;font-weight:bold;letter-spacing:0.000px;">28x/7</span>
<span class="t" style="left:274.00px;top:227px;font-size:11px;color:#0a0a0a;letter-spacing:0.000px;">tjb</span>
<span class="t" style="left:379.50px;top:227px;font-size:11px;color:#0a0a0a;letter-spacing:0.000px;">1x40HC</span>
<span class="t" style="left:483.00px;top:227px;font-size:11px;color:#0a0a0a;letter-spacing:0.000px;">17</span>
<span class="t" style="left:576.00px;top:227px;font-size:11px;color:#0a0a0a;letter-spacing:0.000px;">zim</span>
<span class="t" style="left:672.60px;top:227px;font-size:11px;color:#0a0a0a;letter-spacing:-0.250px;">8.378.000</span>
<span class="t" style="left:782.70px;top:227px;font-size:11px;color:#0a0a0a;letter-spacing:-0.250px;">5.800.000</span>
<span class="t" style="left:1217.00px;top:227px;font-size:11px;color:#0a0a0a;letter-spacing:0.000px;">viet tri -hai phong</span>
<span class="t" style="left:22.10px;top:262px;font-size:11px;color:#161650;letter-spacing:-0.244px;">28/07/2011</span>
<span class="t" style="left:130.10px;top:262px;font-size:11px;color:#e01e1e;font-weight:bold;letter-spacing:0.000px;">28x/7</span>
<span class="t" style="left:253.50px;top:262px;font-size:11px;color:#0a0a0a;letter-spacing:0.000px;">Sungwoon</span>
<span class="t" style="left:381.50px;top:262px;font-size:11px;color:#0a0a0a;letter-spacing:0.000px;">1x40hc</span>
<span class="t" style="left:483.50px;top:262px;font-size:11px;color:#0a0a0a;letter-spacing:0.000px;">23</span>
<span class="t" style="left:578.00px;top:262px;font-size:11px;color:#0a0a0a;letter-spacing:0.000px;">ha</span>
<span class="t" style="left:672.60px;top:262px;font-size:11px;color:#0a0a0a;letter-spacing:-0.250px;">8.490.950</span>
<span class="t" style="left:782.70px;top:262px;font-size:11px;color:#0a0a0a;letter-spacing:-0.250px;">5.800.000</span>
<span class="t" style="left:1209.00px;top:262px;font-size:11px;color:#0a0a0a;letter-spacing:0.000px;">dong lang-hai phong</span>
<span class="t" style="left:22.10px;top:297px;font-size:11px;color:#161650;letter-spacing:-0.244px;">28/07/2011</span>
<span class="t" style="left:130.10px;top:297px;font-size:11px;color:#e01e1e;font-weight:bold;letter-spacing:0.000px;">28x/7</span>
<span class="t" style="left:256.50px;top:297px;font-size:11px;color:#0a0a0a;letter-spacing:0.000px;">Fabchem</span>
<span class="t" style="left:379.50px;top:297px;font-size:11px;color:#0a0a0a;letter-spacing:0.000px;">1x40HC</span>
<span class="t" style="left:483.50px;top:297px;font-size:11px;color:#0a0a0a;letter-spacing:0.000px;">23</span>
<span class="t" style="left:576.50px;top:297px;font-size:11px;color:#0a0a0a;letter-spacing:0.000px;">HA</span>
<span class="t" style="left:672.60px;top:297px;font-size:11px;color:#0a0a0a;letter-spacing:-0.250px;">8.490.000</span>
<span class="t" style="left:782.70px;top:297px;font-size:11px;color:#0a0a0a;letter-spacing:-0.250px;">5.800.000</span>
<span class="t" style="left:1209.00px;top:297px;font-size:11px;color:#0a0a0a;letter-spacing:0.000px;">dong lang-hai phong</span>
<span class="t" style="left:22.10px;top:332px;font-size:11px;color:#161650;letter-spacing:-0.244px;">28/07/2011</span>
<span class="t" style="left:129.60px;top:332px;font-size:11px;color:#e01e1e;font-weight:bold;letter-spacing:0.000px;">28n/7</span>
<span class="t" style="left:271.50px;top:332px;font-size:11px;color:#0a0a0a;letter-spacing:0.000px;">Jeil</span>
<span class="t" style="left:387.00px;top:332px;font-size:11px;color:#0a0a0a;letter-spacing:0.000px;">1x20</span>
<span class="t" style="left:486.00px;top:332px;font-size:11px;color:#0a0a0a;letter-spacing:0.000px;">1</span>
<span class="t" style="left:572.00px;top:332px;font-size:11px;color:#0a0a0a;letter-spacing:0.000px;">SITC</span>
<span class="t" style="left:672.60px;top:332px;font-size:11px;color:#0a0a0a;letter-spacing:-0.250px;">6.030.000</span>
<span class="t" style="left:782.70px;top:332px;font-size:11px;color:#0a0a0a;letter-spacing:-0.250px;">4.200.000</span>
<span class="t" style="left:1211.50px;top:332px;font-size:11px;color:#0a0a0a;letter-spacing:0.000px;">HP- KCN Thuy Van</span>
<span class="t" style="left:22.10px;top:367px;font-size:11px;color:#161650;letter-spacing:-0.244px;">27/07/2011</span>
<span class="t" style="left:117.10px;top:367px;font-size:11px;color:#e01e1e;font-weight:bold;letter-spacing:0.000px;">27n/7-May</span>
<span class="t" style="left:256.50px;top:367px;font-size:11px;color:#0a0a0a;letter-spacing:0.000px;">May 19/5</span>
<span class="t" style="left:387.00px;top:367px;font-size:11px;color:#0a0a0a;letter-spacing:0.000px;">1x20</span>
<span class="t" style="left:486.00px;top:367px;font-size:11px;color:#0a0a0a;letter-spacing:0.000px;">7</span>
<span class="t" style="left:672.60px;top:367px;font-size:11px;color:#0a0a0a;letter-spacing:-0.250px;">3.818.320</span>
<span class="t" style="left:823.70px;top:367px;font-size:11px;color:#0a0a0a;letter-spacing:-0.250px;">0</span>
<span class="t" style="left:1213.00px;top:367px;font-size:11px;color:#0a0a0a;letter-spacing:0.000px;">Hai Phong- Ha Noi</span>
<span class="t" style="left:22.10px;top:402px;font-size:11px;color:#161650;letter-spacing:-0.244px;">27/07/2011</span>
<span class="t" style="left:117.10px;top:402px;font-size:11px;color:#e01e1e;font-weight:bold;letter-spacing:0.000px;">27n/7-May</span>
<span class="t" style="left:256.50px;top:402px;font-size:11px;color:#0a0a0a;letter-spacing:0.000px;">May 19/5</span>
<span class="t" style="left:379.50px;top:402px;font-size:11px;color:#0a0a0a;letter-spacing:0.000px;">1x40HC</span>
<span class="t" style="left:486.00px;top:402px;font-size:11px;color:#0a0a0a;letter-spacing:0.000px;">7</span>
<span class="t" style="left:574.00px;top:402px;font-size:11px;color:#0a0a0a;letter-spacing:0.000px;">ever</span>
<span class="t" style="left:672.60px;top:402px;font-size:11px;color:#0a0a0a;letter-spacing:-0.250px;">4.820.200</span>
<span class="t" style="left:823.70px;top:402px;font-size:11px;color:#0a0a0a;letter-spacing:-0.250px;">0</span>
<span class="t" style="left:1213.00px;top:402px;font-size:11px;color:#0a0a0a;letter-spacing:0.000px;">Hai Phong- Ha Noi</span>
<span class="t" style="left:22.10px;top:437px;font-size:11px;color:#161650;letter-spacing:-0.244px;">27/07/2011</span>
<span class="t" style="left:117.10px;top:437px;font-size:11px;color:#e01e1e;font-weight:bold;letter-spacing:0.000px;">27n/7-May</span>
<span class="t" style="left:256.50px;top:437px;font-size:11px;color:#0a0a0a;letter-spacing:0.000px;">May 19/5</span>
<span class="t" style="left:379.50px;top:437px;font-size:11px;color:#0a0a0a;letter-spacing:0.000px;">1x40HC</span>
<span class="t" style="left:486.00px;top:437px;font-size:11px;color:#0a0a0a;letter-spacing:0.000px;">7</span>
<span class="t" style="left:572.50px;top:437px;font-size:11px;color:#0a0a0a;letter-spacing:0.000px;">Ever</span>
<span class="t" style="left:672.60px;top:437px;font-size:11px;color:#0a0a0a;letter-spacing:-0.250px;">4.820.200</span>
<span class="t" style="left:782.70px;top:437px;font-size:11px;color:#0a0a0a;letter-spacing:-0.250px;">2.600.000</span>
<span class="t" style="left:1213.00px;top:437px;font-size:11px;color:#0a0a0a;letter-spacing:0.000px;">Hai Phong- Ha Noi</span>
<div style="left:1316px;top:121px;width:17px;height:322px;background:linear-gradient(90deg,#bcd5f0,#a9c9ec);border-left:1px solid #d5e5f6"></div>
<div style="left:1316px;top:121px;width:17px;height:18px;background:linear-gradient(90deg,#b7d1ee,#a3c4ea)"></div>
<div style="left:1316px;top:139px;width:17px;height:54px;background:linear-gradient(90deg,#c3dbf4,#87afdc);border:1px solid #6787b2"></div>
<div style="left:1320px;top:162px;width:10px;height:1px;background:#7f9fc8"></div>
<div style="left:1320px;top:164px;width:10px;height:1px;background:#7f9fc8"></div>
<div style="left:1320px;top:166px;width:10px;height:1px;background:#7f9fc8"></div>
<div style="left:1320px;top:168px;width:10px;height:1px;background:#7f9fc8"></div>
<svg style="left:1320px;top:127px" width="9" height="5" viewBox="0 0 9 5"><path d="M0 5 L4.5 0 L9 5 Z" fill="#3d5a88"/></svg>
<svg style="left:1320px;top:432px" width="9" height="5" viewBox="0 0 9 5"><path d="M0 0 L4.5 5 L9 0 Z" fill="#3d5a88"/></svg>
<div style="left:10px;top:443px;width:1306px;height:18px;background:linear-gradient(#9dc1e8,#a7c8ec);border-top:1px solid #7c9cc4;border-bottom:1px solid #98a7b8"></div>
<div style="left:10px;top:444px;width:18px;height:16px;background:#b5cfec"></div>
<div style="left:28px;top:443px;width:566px;height:17px;background:linear-gradient(#b3d1f1,#80acda);border:1px solid #6284ae"></div>
<div style="left:308px;top:448px;width:1px;height:8px;background:#7f9fc8"></div>
<div style="left:310px;top:448px;width:1px;height:8px;background:#7f9fc8"></div>
<div style="left:312px;top:448px;width:1px;height:8px;background:#7f9fc8"></div>
<div style="left:314px;top:448px;width:1px;height:8px;background:#7f9fc8"></div>
<svg style="left:14px;top:447px" width="5" height="9" viewBox="0 0 5 9"><path d="M5 0 L0 4.5 L5 9 Z" fill="#3d5a88"/></svg>
<svg style="left:1305px;top:447px" width="5" height="9" viewBox="0 0 5 9"><path d="M0 0 L5 4.5 L0 9 Z" fill="#3d5a88"/></svg>
<div style="left:1316px;top:443px;width:17px;height:18px;background:#abc9ec;border-bottom:1px solid #98a7b8"></div>
<div style="left:10px;top:461px;width:1323px;height:5px;background:#dbe9f7"></div>
<div style="left:10px;top:466px;width:1323px;height:272px;background:#fff"></div>
<div style="left:10px;top:466px;width:1323px;height:24px;background:linear-gradient(#eef6fd,#d9e9f9);border-top:1px solid #9ea9b6;border-bottom:1px solid #8ca6c9"></div>
<div style="left:49px;top:467px;width:1px;height:21px;background:#a3bad8"></div>
<div style="left:299px;top:467px;width:1px;height:21px;background:#a3bad8"></div>
<div style="left:419px;top:467px;width:1px;height:21px;background:#a3bad8"></div>
<div style="left:539px;top:467px;width:1px;height:21px;background:#a3bad8"></div>
<div style="left:689px;top:467px;width:1px;height:21px;background:#a3bad8"></div>
<div style="left:839px;top:467px;width:1px;height:21px;background:#a3bad8"></div>
<div style="left:14px;top:467px;width:1px;height:21px;background:#a3bad8"></div>
<div style="left:11px;top:469px;width:3px;height:18px;background:#ffffff;border:1px solid #a9b7c8"></div>
<span class="t" style="left:23.70px;top:473px;font-size:13.4px;color:#1e1e78;letter-spacing:0.550px;">[+]</span>
<span class="t" style="left:136.70px;top:473px;font-size:13.4px;color:#1e1e78;letter-spacing:0.086px;">Nội Dung</span>
<span class="t" style="left:321.00px;top:473px;font-size:13.4px;color:#1e1e78;letter-spacing:-0.225px;">Trả Trước</span>
<span class="t" style="left:443.50px;top:473px;font-size:13.4px;color:#1e1e78;letter-spacing:0.157px;">Phải Trả</span>
<span class="t" style="left:574.50px;top:473px;font-size:13.4px;color:#1e1e78;letter-spacing:-0.014px;">Danh Mục</span>
<span class="t" style="left:736.90px;top:473px;font-size:13.4px;color:#1e1e78;letter-spacing:0.533px;">THTH</span>
<span class="t" style="left:1306.00px;top:473px;font-size:13.4px;color:#1e1e78;letter-spacing:-0.667px;">Ghi Chú</span>
<div style="left:10px;top:722px;width:1323px;height:18px;background:linear-gradient(#9dc1e8,#a7c8ec);border-top:1px solid #7c9cc4;border-bottom:1px solid #8d9db3"></div>
<div style="left:10px;top:723px;width:17px;height:16px;background:#b5cfec"></div>
<div style="left:27px;top:722px;width:810px;height:17px;background:linear-gradient(#b3d1f1,#80acda);border:1px solid #6284ae"></div>
<div style="left:429px;top:727px;width:1px;height:8px;background:#7f9fc8"></div>
<div style="left:431px;top:727px;width:1px;height:8px;background:#7f9fc8"></div>
<div style="left:433px;top:727px;width:1px;height:8px;background:#7f9fc8"></div>
<div style="left:435px;top:727px;width:1px;height:8px;background:#7f9fc8"></div>
<svg style="left:14px;top:726px" width="5" height="9" viewBox="0 0 5 9"><path d="M5 0 L0 4.5 L5 9 Z" fill="#3d5a88"/></svg>
<svg style="left:1322px;top:726px" width="5" height="9" viewBox="0 0 5 9"><path d="M0 0 L5 4.5 L0 9 Z" fill="#3d5a88"/></svg>
<div style="left:10px;top:740px;width:1324px;height:20px;background:linear-gradient(#cbe1f6,#acc9eb);border-bottom:1px solid #7993b9"></div>
<span class="t" style="left:9.50px;top:745px;font-size:11.5px;color:#2b2b8c;letter-spacing:0.400px;">lblDem</span>
<div style="left:10px;top:760px;width:1325px;height:27px;background:linear-gradient(#cde2f7,#bed6f1 50%,#aecbeb);border-top:1px solid #dfeffc"></div>
<div style="left:13px;top:765px;width:2px;height:2px;background:#8fa9ca"></div>
<div style="left:13px;top:769px;width:2px;height:2px;background:#8fa9ca"></div>
<div style="left:13px;top:773px;width:2px;height:2px;background:#8fa9ca"></div>
<div style="left:13px;top:777px;width:2px;height:2px;background:#8fa9ca"></div>
<div style="left:18px;top:763px;width:72px;height:20px;background:#f3f6fa;border:1px solid #d0dae6;border-radius:3px"></div>
<div style="left:19px;top:764px;width:27px;height:18px;background:linear-gradient(#ebebeb,#d5d5d5);border:1px solid #b9c2cc;border-radius:3px"></div>
<span class="t" style="left:57.50px;top:768px;font-size:12px;color:#5d6c84;font-weight:bold;letter-spacing:-1.100px;">TẮT</span>
<div style="left:176px;top:765px;width:1px;height:18px;background:#97b3d6"></div>
<div style="left:177px;top:765px;width:1px;height:18px;background:#e4eef9"></div>
<div style="left:261px;top:765px;width:1px;height:18px;background:#97b3d6"></div>
<div style="left:262px;top:765px;width:1px;height:18px;background:#e4eef9"></div>
<div style="left:408px;top:765px;width:1px;height:18px;background:#97b3d6"></div>
<div style="left:409px;top:765px;width:1px;height:18px;background:#e4eef9"></div>
<div style="left:1239px;top:765px;width:1px;height:18px;background:#97b3d6"></div>
<div style="left:1240px;top:765px;width:1px;height:18px;background:#e4eef9"></div>
<span class="t" style="left:117.00px;top:768px;font-size:12px;color:#1e3269;font-weight:bold;letter-spacing:-0.375px;">.\SQL2005</span>
<span class="t" style="left:202.70px;top:768px;font-size:12px;color:#1e3269;font-weight:bold;letter-spacing:-0.543px;">TASA2011</span>
<span class="t" style="left:287.40px;top:768px;font-size:12px;color:#1e3269;font-weight:bold;letter-spacing:-0.750px;">admin - (Administrator)</span>
<span class="t" style="left:434.30px;top:768px;font-size:12px;color:#1e3269;font-weight:bold;letter-spacing:-0.365px;">24/10/2018 9:50:02 SA</span>
<span class="t" style="left:1244.50px;top:769px;font-size:11.8px;color:#22227a;letter-spacing:-0.469px;">Phiên bản 1.1.3.1</span>
<svg style="left:97px;top:765px" width="18" height="15" viewBox="0 0 18 15"><rect x="0.5" y="0.5" width="12" height="9" fill="#2f78c4" stroke="#8aa0b8" stroke-width="0.8"/><rect x="1.5" y="1.5" width="10" height="3" fill="#5aa6e6"/><rect x="1" y="2" width="1" height="1" fill="#fff"/><rect x="1" y="4.5" width="1" height="1" fill="#fff"/><rect x="4" y="10" width="4" height="1.2" fill="#777"/><rect x="0" y="11.5" width="13" height="2.5" fill="#e6e6e6" stroke="#aaa" stroke-width="0.5"/><rect x="13" y="3" width="3.5" height="11" rx="1" fill="#f2b632"/><rect x="14" y="1" width="1.5" height="3" fill="#d9d9d9"/></svg>
<svg style="left:182px;top:765px" width="18" height="16" viewBox="0 0 18 16"><ellipse cx="8.5" cy="9" rx="7.8" ry="6.8" fill="#9cc6e6" stroke="#6d9cc6" stroke-width="0.8"/><ellipse cx="10.5" cy="7.8" rx="6.8" ry="7" fill="#b8dcf4" stroke="#6d9cc6" stroke-width="0.8"/><circle cx="10.5" cy="7.8" r="2" fill="#e8f4fc" stroke="#6d9cc6" stroke-width="0.8"/></svg>
<svg style="left:269px;top:764px" width="14" height="17" viewBox="0 0 14 17"><defs><linearGradient id="gus" x1="0" y1="0" x2="0" y2="1"><stop offset="0" stop-color="#7ccaf6"/><stop offset="1" stop-color="#2e9ae6"/></linearGradient></defs><ellipse cx="7" cy="4.6" rx="3.8" ry="4" fill="url(#gus)"/><path d="M1.5 16 Q0.5 9.5 4.5 8.5 Q7 9.5 9.5 8.5 Q13.5 9.5 12.5 16 Q7 17 1.5 16 Z" fill="url(#gus)"/></svg>
<svg style="left:415px;top:764px" width="16" height="17" viewBox="0 0 16 17"><path d="M2 14.5 L1 16.5 H4 Z M14 14.5 L15 16.5 H12 Z" fill="#2a6f98"/><circle cx="8" cy="8.5" r="7" fill="#eaf6fc" stroke="#2f93c2" stroke-width="1.8"/><circle cx="8" cy="8.5" r="5.2" fill="#fff"/><path d="M8 8.5 L4.5 6.8" stroke="#333" stroke-width="1.1"/><path d="M8 8.5 L12 9.5" stroke="#d02020" stroke-width="1"/><path d="M3 1.5 Q5 0.5 6 2 M13 1.5 Q11 0.5 10 2" stroke="#2f93c2" stroke-width="1.2" fill="none"/></svg>
<div style="left:1333px;top:68px;width:2px;height:720px;background:linear-gradient(90deg,#8a9db6,#809dc3)"></div>
<div style="left:1335px;top:31px;width:7px;height:757px;background:linear-gradient(90deg,#abcdf0,#aecfef 70%,#c3dff5)"></div>
<div style="left:1342px;top:0px;width:1px;height:795px;background:#8797b0"></div>
<div style="left:1343px;top:0px;width:1px;height:795px;background:#e4f4fd"></div>
</body></html>
